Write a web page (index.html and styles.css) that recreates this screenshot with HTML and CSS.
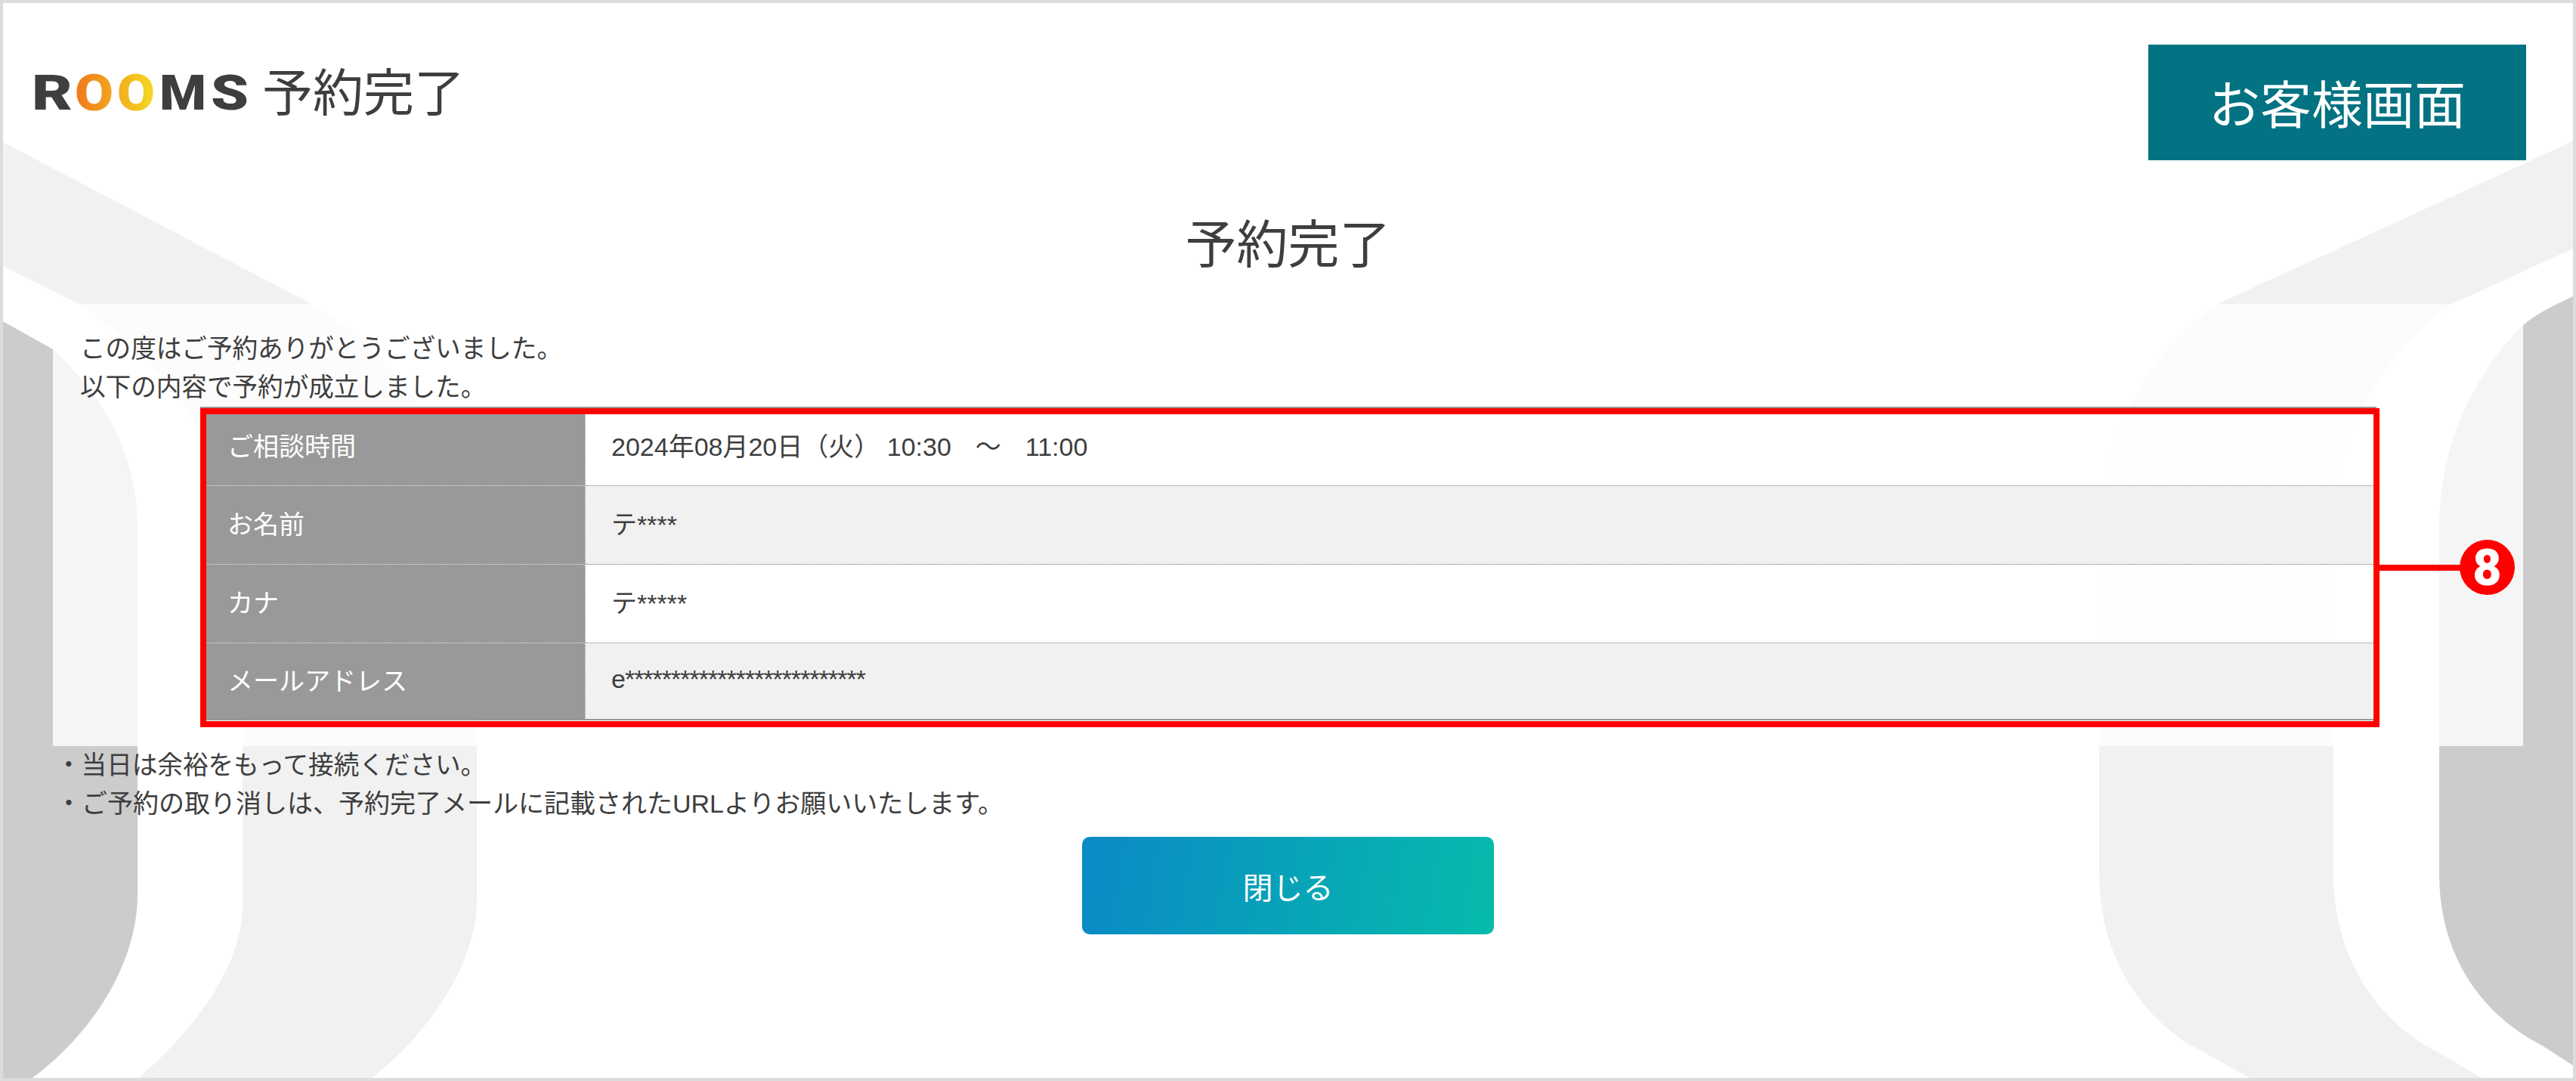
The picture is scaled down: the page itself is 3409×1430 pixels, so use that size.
FILE: index.html
```html
<!DOCTYPE html>
<html lang="ja">
<head>
<meta charset="UTF-8">
<title>予約完了</title>
<link rel="stylesheet" href="styles.css">
</head>
<body>

<div class="page">
  <!-- background bands -->
  <svg class="page-bg" width="3409" height="1430" viewBox="0 0 3409 1430">
    <path fill="#f1f1f1" d="M0 186 L412 402 C540 480 631 620 631 780 V1190 C631 1280 560 1375 487 1430 H179 C255 1365 321 1280 321 1197 V780 C321 620 240 500 105 402 L0 350 Z"/>
    <path fill="#cccccc" d="M0 423 L70 462 C130 520 182 590 182 700 V1183 C182 1280 115 1375 37 1430 H0 Z"/>
    <path fill="#f1f1f1" d="M3409 185 L2935 402 C2840 470 2778 580 2778 700 V1156 C2778 1260 2830 1350 2920 1394 L2984 1430 H3291 L3230 1394 C3140 1350 3088 1260 3088 1156 V700 C3088 580 3150 470 3245 402 L3409 327 Z"/>
    <path fill="#cccccc" d="M3409 390 C3385 402 3360 412 3339 430 C3270 500 3228 590 3228 700 V1156 C3228 1260 3280 1340 3364 1383 L3409 1412 Z"/>
  </svg>

  <header class="top">
    <div class="brand">
      <svg class="logo" width="294" height="100" viewBox="-10 0 294 100" role="img" aria-label="ROOMS">
        <defs>
          <linearGradient id="logoO" gradientUnits="userSpaceOnUse" x1="56" y1="0" x2="156" y2="0">
            <stop offset="0" stop-color="#f07a1c"/>
            <stop offset="1" stop-color="#f5d722"/>
          </linearGradient>
        </defs>
        <text class="logo-text" x="-4" y="74" textLength="54" lengthAdjust="spacingAndGlyphs">R</text>
        <text class="logo-text logo-o" x="53" y="75" textLength="51" lengthAdjust="spacingAndGlyphs">O</text>
        <text class="logo-text logo-o" x="109" y="75" textLength="50" lengthAdjust="spacingAndGlyphs">O</text>
        <text class="logo-text" x="165" y="74" textLength="62" lengthAdjust="spacingAndGlyphs">M</text>
        <text class="logo-text" x="233" y="74" textLength="50" lengthAdjust="spacingAndGlyphs">S</text>
      </svg>
      <h1 class="brand-title">予約完了</h1>
    </div>
    <div class="badge">お客様画面</div>
  </header>

  <h2 class="title">予約完了</h2>

  <section class="panel">
    <p class="thanks">この度はご予約ありがとうございました。<br>以下の内容で予約が成立しました。</p>

    <div class="info-wrap">
      <table class="info">
        <tr>
          <th>ご相談時間</th>
          <td>2024年08月20日（火） 10:30<span class="tilde">〜</span>11:00</td>
        </tr>
        <tr class="alt">
          <th>お名前</th>
          <td>テ****</td>
        </tr>
        <tr>
          <th>カナ</th>
          <td>テ*****</td>
        </tr>
        <tr class="alt">
          <th>メールアドレス</th>
          <td class="masked">e**************************</td>
        </tr>
      </table>

      <div class="mark"></div>
      <div class="mark-line"></div>
      <div class="mark-num">8</div>
    </div>
  </section>

  <ul class="notes">
    <li>・当日は余裕をもって接続ください。</li>
    <li>・ご予約の取り消しは、予約完了メールに記載されたURLよりお願いいたします。</li>
  </ul>

  <div class="actions">
    <button class="close-btn">閉じる</button>
  </div>
</div>

</body>
</html>
```

FILE: styles.css
```css
body {
  margin: 0;
  background: #fff;
  color: #3e3e3e;
  font-family: "Liberation Sans", "Noto Sans CJK JP", sans-serif;
}

.page {
  position: relative;
  width: 3409px;
  height: 1430px;
  box-sizing: border-box;
  border: 4px solid #dcdcdc;
  overflow: hidden;
}

.page-bg {
  position: absolute;
  top: -4px;
  left: -4px;
}

.top {
  position: relative;
  display: flex;
  justify-content: space-between;
  align-items: flex-start;
  padding: 55px 62px 0 32px;
}

.brand {
  display: flex;
  align-items: center;
  gap: 17px;
  margin-top: 12px;
}

.logo {
  display: block;
}

.logo-text {
  font-family: "Roboto", sans-serif;
  font-weight: 900;
  font-size: 64px;
  fill: #3e3e3e;
}

.logo-o {
  font-size: 66px;
  fill: url(#logoO);
}

.brand-title {
  margin: 0;
  padding-bottom: 6px;
  font-size: 67px;
  font-weight: 400;
  line-height: 94px;
  font-family: "Noto Sans CJK JP", sans-serif;
}

.badge {
  width: 500px;
  height: 153px;
  box-sizing: border-box;
  padding-bottom: 2px;
  display: flex;
  align-items: center;
  justify-content: center;
  background: #037282;
  color: #fff;
  font-size: 68px;
}

.title {
  position: relative;
  margin: 62px 0 0;
  text-align: center;
  font-size: 68px;
  font-weight: 400;
  line-height: 100px;
}

.panel {
  position: relative;
  margin: 28px 66px 0;
  padding: 34px 0;
  background: rgba(255, 255, 255, 0.8);
}

.thanks {
  margin: 0 0 0 36px;
  font-size: 33.6px;
  line-height: 51px;
}

.info-wrap {
  position: relative;
  margin-left: 195px;
  width: 2880px;
}

.info {
  width: 100%;
  table-layout: fixed;
  border-collapse: separate;
  border-spacing: 0;
  border-top: 2px solid #999;
  border-bottom: 2px solid #999;
  font-size: 34px;
}

.info th,
.info td {
  height: 104px;
  box-sizing: border-box;
  padding: 0 0 6px;
  text-align: left;
  font-weight: 400;
}

.info tr:first-child th,
.info tr:first-child td {
  height: 103px;
}

.info tr:last-child th,
.info tr:last-child td {
  height: 100px;
  border-bottom: none;
}

.info th {
  width: 510px;
  padding-left: 36px;
  background: #999;
  color: #fff;
  border-bottom: 1px dotted #eee;
  border-right: 1px dotted #eee;
}

.info td {
  padding-left: 34px;
  background: rgba(255, 255, 255, 0.6);
  border-bottom: 1px dotted #777;
}

.info .alt td {
  background: #f1f1f1;
}

.tilde {
  margin: 0 32px;
}

.masked {
  letter-spacing: -1px;
}

/* red annotation over the table */
.mark {
  position: absolute;
  top: 2px;
  left: 0;
  width: 2884px;
  height: 422px;
  box-sizing: border-box;
  border: 8px solid #f00;
}

.mark-line {
  position: absolute;
  top: 209px;
  left: 2884px;
  width: 110px;
  height: 8px;
  background: #f00;
}

.mark-num {
  position: absolute;
  top: 176px;
  left: 2990px;
  width: 73px;
  height: 73px;
  border-radius: 50%;
  background: #f00;
  color: #fff;
  font-family: "Roboto", sans-serif;
  font-weight: 900;
  font-size: 66px;
  line-height: 75px;
  text-align: center;
}

.notes {
  position: relative;
  margin: 0 0 0 70px;
  padding: 0;
  list-style: none;
  font-size: 33.6px;
  line-height: 51px;
}

.notes li + li {
  font-size: 34px;
}

.actions {
  position: relative;
  display: flex;
  justify-content: center;
  margin-top: 18px;
}

.close-btn {
  width: 545px;
  height: 129px;
  border: none;
  border-radius: 10px;
  background: linear-gradient(100deg, #0a8ac6, #06bbab);
  color: #fff;
  font-family: inherit;
  font-size: 40px;
}
```
